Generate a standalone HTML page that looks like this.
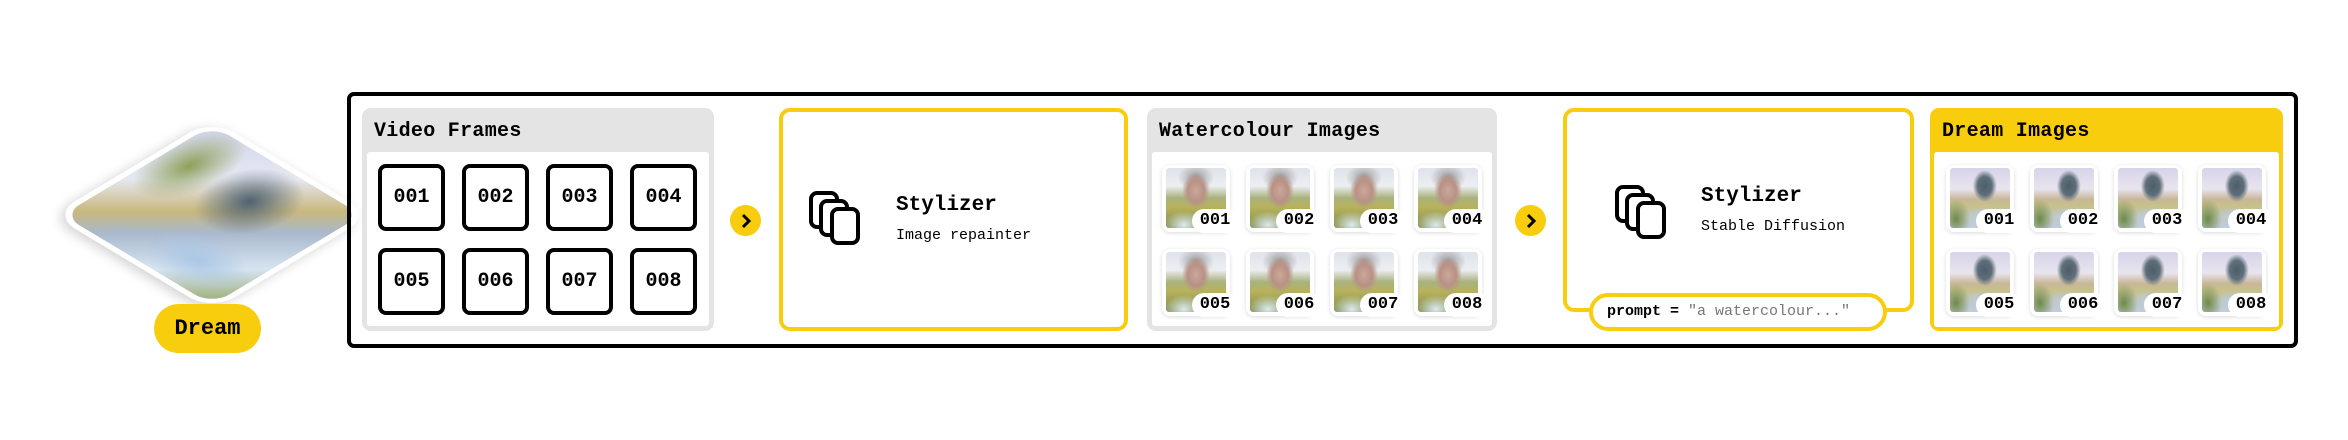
<!DOCTYPE html>
<html><head><meta charset="utf-8"><style>
*{box-sizing:border-box;margin:0;padding:0}
body{width:2348px;height:440px;background:#fff;position:relative;overflow:hidden;font-family:"Liberation Mono",monospace;color:#000}
.a{position:absolute}
.outer{left:347px;top:92px;width:1951px;height:256px;border:4px solid #000;border-radius:7px}
.panel{top:108px;height:223px;background:#e4e4e4;border-radius:9px}
.panel .inner{position:absolute;left:5px;right:5px;top:44px;bottom:5px;background:#fff;border-radius:3px}
.ht{position:absolute;left:12px;top:12px;font-size:20px;font-weight:bold;letter-spacing:0.3px}
.fr{width:67px;height:67px;border:4px solid #000;border-radius:8px;display:flex;align-items:center;justify-content:center;font-size:20px;font-weight:bold}
.arrow{width:31px;height:31px;border-radius:50%;background:#f8cd0e;display:flex;align-items:center;justify-content:center}
.ybox{border:4px solid #f8cd0e;border-radius:11px;background:#fff}
.card{width:68px;height:67px;background:#fff;border-radius:8px;box-shadow:0 1px 4px rgba(0,0,0,.15)}
.card .im{position:absolute;left:4px;top:3px;width:60px;height:60px;border-radius:3px}
.card .lb{position:absolute;left:30px;top:44px;width:46px;height:24px;background:#fff;border-radius:12px;font-size:17px;font-weight:bold;text-align:center;line-height:24px}
.w .im{background:
radial-gradient(ellipse 14px 18px at 50% 38%,#c9a89a 0,#b99185 60%,rgba(185,145,133,0) 100%),
radial-gradient(ellipse 18px 14px at 50% 16%,#9a9a9a 0,rgba(154,154,154,0) 100%),
radial-gradient(ellipse 20px 14px at 30% 95%,#dbe9ef 0,rgba(219,233,239,0) 100%),
linear-gradient(#dfe3ea 0,#eceef2 30%,#a9b27d 50%,#b8b25c 65%,#7f8c4e 100%)}
.d .im{background:
radial-gradient(ellipse 12px 16px at 58% 30%,#4d5d6a 0,#5e6f7a 60%,rgba(94,111,122,0) 100%),
radial-gradient(ellipse 16px 10px at 50% 82%,#b9cde3 0,rgba(185,205,227,0) 100%),
radial-gradient(ellipse 14px 20px at 10% 85%,#6f8a4a 0,rgba(111,138,74,0) 100%),
linear-gradient(#d7d4ea 0,#e8e4ee 35%,#c8b79a 52%,#c7c08a 62%,#bfcde0 100%)}
.st{font-size:21px;font-weight:bold}
.ss{font-size:15px}
</style></head><body>

<!-- diamond -->
<div class="a" style="left:99px;top:102px;width:226px;height:226px;transform:scaleY(0.6) rotate(45deg);border-radius:32px;border:7px solid #fff;box-shadow:0 6px 14px rgba(0,0,0,.18);background:
radial-gradient(ellipse 50px 60px at 55% 30%,#4f6272 0,rgba(79,98,114,0) 100%),
radial-gradient(ellipse 60px 40px at 70% 80%,#aac7e6 0,rgba(170,199,230,0) 100%),
radial-gradient(ellipse 40px 70px at 15% 30%,#8ea05a 0,rgba(142,160,90,0) 100%),
linear-gradient(135deg,#cfd3ea 0,#e6e8f2 30%,#c9b87e 48%,#a9b8cc 60%,#d6e4f2 80%,#97a86a 100%)"></div>
<div class="a" style="left:154px;top:304px;width:107px;height:49px;border-radius:25px;background:#f8cd0e;font-size:22px;font-weight:bold;text-align:center;line-height:49px">Dream</div>

<div class="a outer"></div>

<!-- Video frames -->
<div class="a panel" style="left:362px;width:352px"><div class="ht">Video Frames</div><div class="inner"></div></div>
<div class="a fr" style="left:378px;top:164px">001</div>
<div class="a fr" style="left:462px;top:164px">002</div>
<div class="a fr" style="left:546px;top:164px">003</div>
<div class="a fr" style="left:630px;top:164px">004</div>
<div class="a fr" style="left:378px;top:248px">005</div>
<div class="a fr" style="left:462px;top:248px">006</div>
<div class="a fr" style="left:546px;top:248px">007</div>
<div class="a fr" style="left:630px;top:248px">008</div>

<div class="a arrow" style="left:730px;top:205px"><svg width="14" height="16" viewBox="0 0 14 16"><path d="M4 2 L10 8 L4 14" fill="none" stroke="#000" stroke-width="3"/></svg></div>

<!-- Stylizer 1 -->
<div class="a ybox" style="left:779px;top:108px;width:349px;height:223px"></div>
<svg class="a" style="left:808px;top:190px" width="56" height="56" viewBox="0 0 56 56"><g fill="#fff" stroke="#000" stroke-width="4"><rect x="3" y="3" width="26" height="34" rx="6"/><rect x="13" y="11" width="26" height="34" rx="6"/><rect x="24" y="19" width="26" height="34" rx="6"/></g></svg>
<div class="a st" style="left:896px;top:194px">Stylizer</div>
<div class="a ss" style="left:896px;top:227px">Image repainter</div>

<!-- Watercolour -->
<div class="a panel" style="left:1147px;width:350px"><div class="ht">Watercolour Images</div><div class="inner"></div></div>
<div class="a card w" style="left:1162px;top:165px"><div class="im"></div><div class="lb">001</div></div>
<div class="a card w" style="left:1246px;top:165px"><div class="im"></div><div class="lb">002</div></div>
<div class="a card w" style="left:1330px;top:165px"><div class="im"></div><div class="lb">003</div></div>
<div class="a card w" style="left:1414px;top:165px"><div class="im"></div><div class="lb">004</div></div>
<div class="a card w" style="left:1162px;top:249px"><div class="im"></div><div class="lb">005</div></div>
<div class="a card w" style="left:1246px;top:249px"><div class="im"></div><div class="lb">006</div></div>
<div class="a card w" style="left:1330px;top:249px"><div class="im"></div><div class="lb">007</div></div>
<div class="a card w" style="left:1414px;top:249px"><div class="im"></div><div class="lb">008</div></div>

<div class="a arrow" style="left:1515px;top:205px"><svg width="14" height="16" viewBox="0 0 14 16"><path d="M4 2 L10 8 L4 14" fill="none" stroke="#000" stroke-width="3"/></svg></div>

<!-- Stylizer 2 -->
<div class="a ybox" style="left:1563px;top:108px;width:351px;height:204px"></div>
<svg class="a" style="left:1614px;top:184px" width="56" height="56" viewBox="0 0 56 56"><g fill="#fff" stroke="#000" stroke-width="4"><rect x="3" y="3" width="26" height="34" rx="6"/><rect x="13" y="11" width="26" height="34" rx="6"/><rect x="24" y="19" width="26" height="34" rx="6"/></g></svg>
<div class="a st" style="left:1701px;top:185px">Stylizer</div>
<div class="a ss" style="left:1701px;top:218px">Stable Diffusion</div>
<div class="a" style="left:1589px;top:293px;width:298px;height:38px;border:4px solid #f8cd0e;border-radius:19px;background:#fff;font-size:15px;line-height:30px;padding-left:14px;white-space:nowrap"><b>prompt = </b><span style="color:#777">"a watercolour..."</span></div>

<!-- Dream images -->
<div class="a" style="left:1930px;top:108px;width:353px;height:223px;background:#f8cd0e;border-radius:9px"><div class="ht">Dream Images</div><div style="position:absolute;left:4px;right:4px;top:44px;bottom:4px;background:#fff;border-radius:3px"></div></div>
<div class="a card d" style="left:1946px;top:165px"><div class="im"></div><div class="lb">001</div></div>
<div class="a card d" style="left:2030px;top:165px"><div class="im"></div><div class="lb">002</div></div>
<div class="a card d" style="left:2114px;top:165px"><div class="im"></div><div class="lb">003</div></div>
<div class="a card d" style="left:2198px;top:165px"><div class="im"></div><div class="lb">004</div></div>
<div class="a card d" style="left:1946px;top:249px"><div class="im"></div><div class="lb">005</div></div>
<div class="a card d" style="left:2030px;top:249px"><div class="im"></div><div class="lb">006</div></div>
<div class="a card d" style="left:2114px;top:249px"><div class="im"></div><div class="lb">007</div></div>
<div class="a card d" style="left:2198px;top:249px"><div class="im"></div><div class="lb">008</div></div>

</body></html>
